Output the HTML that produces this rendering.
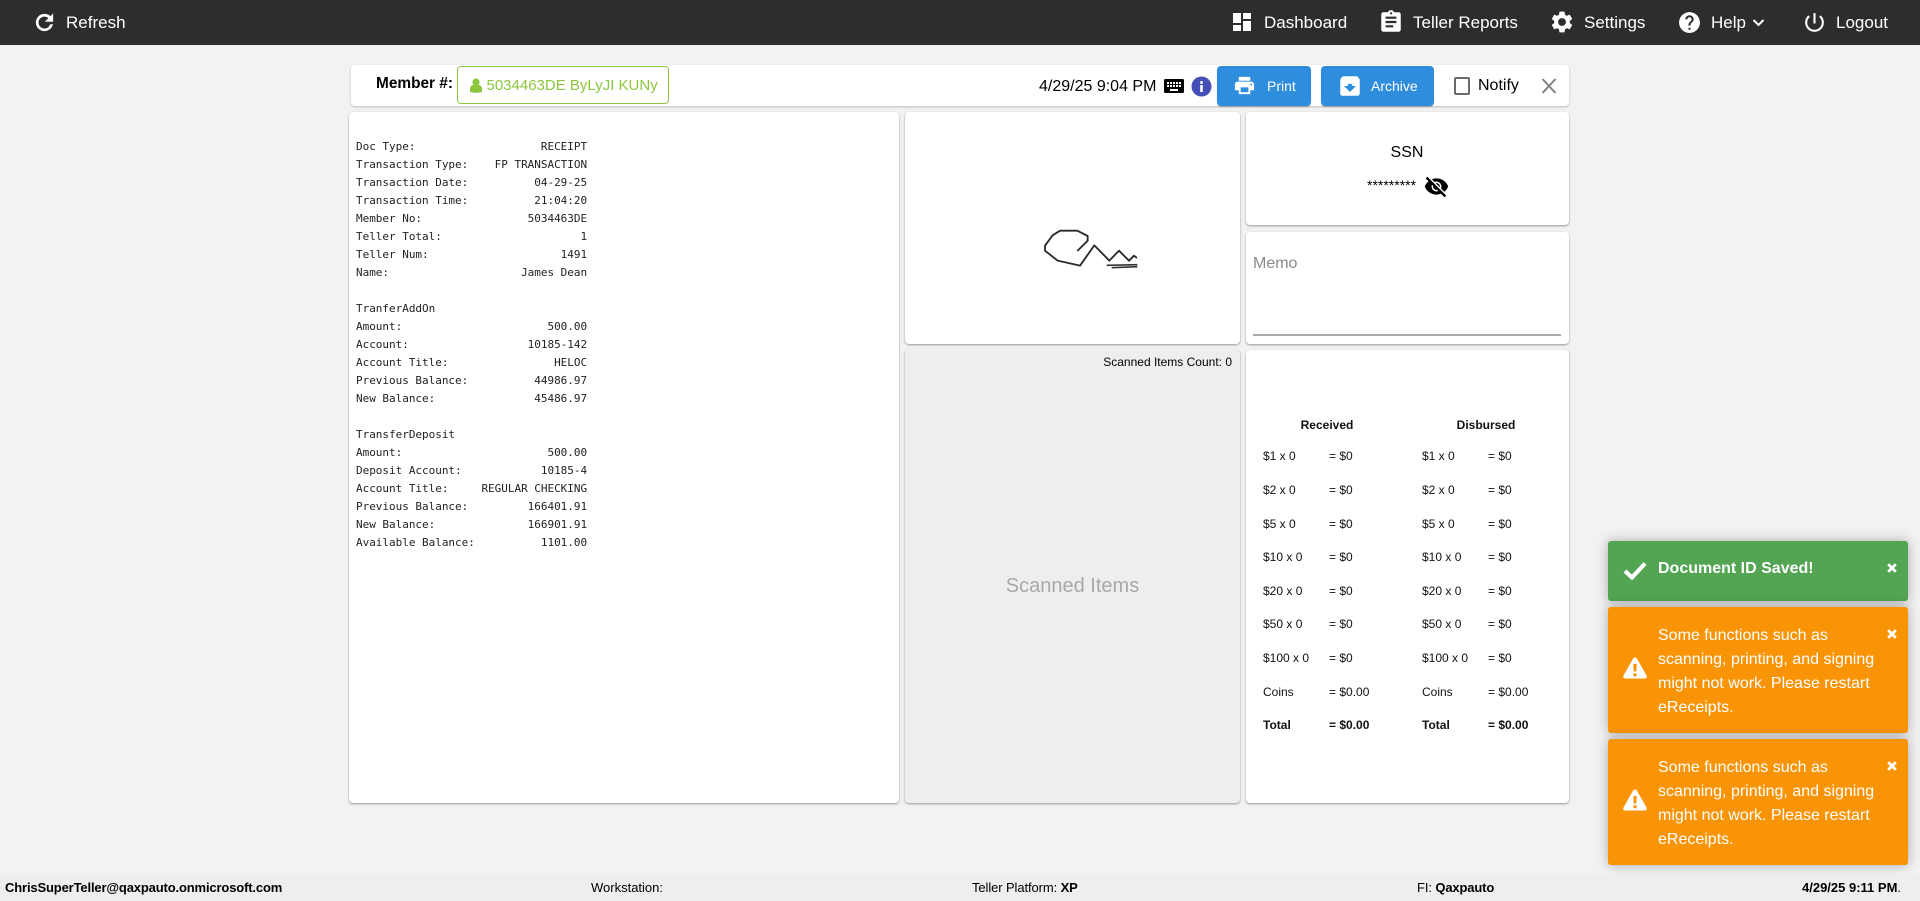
<!DOCTYPE html>
<html lang="en"><head><meta charset="utf-8"><title>Receipt</title>
<style>
html,body{margin:0;padding:0;width:1920px;height:901px;overflow:hidden;background:#f2f2f2;font-family:"Liberation Sans",Arial,sans-serif;color:#000}
.a{position:absolute}
.t{position:absolute;white-space:nowrap}
.card{position:absolute;background:#fff;border-radius:4px;box-shadow:0 1px 2px rgba(0,0,0,.38)}
#hdr{position:absolute;left:0;top:0;width:1920px;height:45px;background:#2d2d2d}
.nav{color:#fff;font-size:17px;line-height:45px;top:0}
svg{position:absolute;display:block}
.w{fill:#fff}
pre{position:absolute;margin:0;left:356px;top:138px;font:11px/18px "DejaVu Sans Mono","Liberation Mono",monospace;color:#222;letter-spacing:-.02px}
.r{font-size:12px;line-height:16px;color:#111}
.toast{position:absolute;left:1608px;width:300px;border-radius:3px;box-shadow:0 0 12px rgba(0,0,0,.3);color:#fff}
.o{background:#fa9407;height:126px}
.msg{position:absolute;left:50px;top:17px;width:235px;font-size:16px;line-height:24px}
.x{position:absolute;left:279px;top:22px}
.btn{position:absolute;top:66px;height:40px;background:#2f8ddd;border-radius:4px;box-shadow:0 1px 1px rgba(0,0,0,.25)}
.ft{font-size:13px;line-height:26px;top:875px}
.ft b,.tight{letter-spacing:-.15px}
</style></head><body>

<div id="hdr"></div>
<svg style="left:32px;top:10px" width="25" height="25" viewBox="0 0 24 24"><path class="w" stroke="#fff" stroke-width=".6" d="M17.65 6.35C16.2 4.9 14.21 4 12 4c-4.42 0-7.99 3.58-7.99 8s3.57 8 7.99 8c3.73 0 6.84-2.55 7.73-6h-2.08c-.82 2.33-3.04 4-5.65 4-3.31 0-6-2.69-6-6s2.69-6 6-6c1.66 0 3.14.69 4.22 1.78L13 11h7V4l-2.35 2.35z"/></svg>
<div class="t nav" style="left:66px">Refresh</div>

<svg style="left:1230px;top:10px" width="24" height="24" viewBox="0 0 24 24"><path class="w" d="M3 13h8V3H3v10zm0 8h8v-6H3v6zm10 0h8V11h-8v10zm0-18v6h8V3h-8z"/></svg>
<div class="t nav" style="left:1264px">Dashboard</div>
<svg style="left:1378px;top:9px" width="26" height="26" viewBox="0 0 24 24"><path class="w" d="M19 3h-4.18C14.4 1.84 13.3 1 12 1c-1.3 0-2.4.84-2.82 2H5c-1.1 0-2 .9-2 2v14c0 1.1.9 2 2 2h14c1.1 0 2-.9 2-2V5c0-1.1-.9-2-2-2zm-7 0c.55 0 1 .45 1 1s-.45 1-1 1-1-.45-1-1 .45-1 1-1zm2 14H7v-2h7v2zm3-4H7v-2h10v2zm0-4H7V7h10v2z"/></svg>
<div class="t nav" style="left:1413px">Teller Reports</div>
<svg style="left:1549px;top:9px" width="26" height="26" viewBox="0 0 24 24"><path class="w" d="M19.14 12.94c.04-.3.06-.61.06-.94 0-.32-.02-.64-.07-.94l2.03-1.58c.18-.14.23-.41.12-.61l-1.92-3.32c-.12-.22-.37-.29-.59-.22l-2.39.96c-.5-.38-1.03-.7-1.62-.94l-.36-2.54c-.04-.24-.24-.41-.48-.41h-3.84c-.24 0-.43.17-.47.41l-.36 2.54c-.59.24-1.13.57-1.62.94l-2.39-.96c-.22-.08-.47 0-.59.22L2.74 8.87c-.12.21-.08.47.12.61l2.03 1.58c-.05.3-.09.63-.09.94s.02.64.07.94l-2.03 1.58c-.18.14-.23.41-.12.61l1.92 3.32c.12.22.37.29.59.22l2.39-.96c.5.38 1.03.7 1.62.94l.36 2.54c.05.24.24.41.48.41h3.84c.24 0 .44-.17.47-.41l.36-2.54c.59-.24 1.13-.56 1.62-.94l2.39.96c.22.08.47 0 .59-.22l1.92-3.32c.12-.22.07-.47-.12-.61l-2.01-1.58zM12 15.6c-1.98 0-3.6-1.62-3.6-3.6s1.62-3.6 3.6-3.6 3.6 1.62 3.6 3.6-1.62 3.6-3.6 3.6z"/></svg>
<div class="t nav" style="left:1584px">Settings</div>
<svg style="left:1677px;top:10px" width="25" height="25" viewBox="0 0 24 24"><path class="w" d="M12 2C6.48 2 2 6.48 2 12s4.48 10 10 10 10-4.48 10-10S17.52 2 12 2zm1 17h-2v-2h2v2zm2.07-7.75l-.9.92C13.45 12.9 13 13.5 13 15h-2v-.5c0-1.1.45-2.1 1.17-2.83l1.24-1.26c.37-.36.59-.86.59-1.41 0-1.1-.9-2-2-2s-2 .9-2 2H8c0-2.21 1.79-4 4-4s4 1.79 4 4c0 .88-.36 1.68-.93 2.25z"/></svg>
<div class="t nav" style="left:1711px">Help</div>
<svg style="left:1752px;top:18px" width="13" height="10" viewBox="0 0 13 10"><path d="M1.5 2l5 5 5-5" fill="none" stroke="#fff" stroke-width="2"/></svg>
<svg style="left:1802px;top:10px" width="25" height="25" viewBox="0 0 24 24"><path class="w" d="M13 3h-2v10h2V3zm4.83 2.17l-1.42 1.42C17.99 7.86 19 9.81 19 12c0 3.87-3.13 7-7 7s-7-3.13-7-7c0-2.19 1.01-4.14 2.58-5.42L6.17 5.17C4.23 6.82 3 9.26 3 12c0 4.97 4.03 9 9 9s9-4.03 9-9c0-2.74-1.23-5.18-3.17-6.83z"/></svg>
<div class="t nav" style="left:1836px">Logout</div>

<!-- top bar -->
<div class="card" style="left:351px;top:65px;width:1218px;height:41px;box-shadow:0 1px 2px rgba(0,0,0,.22)"></div>
<div class="t" style="left:376px;top:73px;font:bold 15.4px/22px 'Liberation Sans',sans-serif">Member #:</div>
<div class="a" style="left:457px;top:66px;width:210px;height:36px;border:1px solid #8dc63f;border-radius:4px"></div>
<svg style="left:470px;top:78px" width="12" height="15" viewBox="0 0 12 15"><circle cx="6" cy="4" r="3.6" fill="#8dc63f"/><path d="M0 14v-3c0-2.5 2-4 3.5-4.2h5C10 7 12 8.500 12 11v3q-6 1.500-12 0z" fill="#8dc63f"/></svg>
<div class="t" style="left:486.500px;top:75px;font-size:15px;line-height:22px;color:#8dc63f">5034463DE ByLyJI KUNy</div>
<div class="t" style="left:1039px;top:76px;font-size:16px;line-height:22px">4/29/25 9:04 PM</div>
<svg style="left:1162px;top:74px" width="24" height="24" viewBox="0 0 24 24"><rect x="2" y="5" width="20" height="14" rx="1.500" fill="#000"/><path fill="#fff" d="M5 8h2v2H5zM8 8h2v2H8zM11 8h2v2h-2zM14 8h2v2h-2zM17 8h2v2h-2zM5 11h2v2H5zM8 11h2v2H8zM11 11h2v2h-2zM14 11h2v2h-2zM17 11h2v2h-2zM8 15h8v2H8z"/></svg>
<svg style="left:1191px;top:76px" width="21" height="21" viewBox="0 0 21 21"><circle cx="10.500" cy="10.500" r="10" fill="#4450b5"/><rect x="9.200" y="9" width="2.600" height="7" fill="#fff"/><rect x="9.200" y="5.200" width="2.600" height="2.600" fill="#fff"/></svg>
<div class="btn" style="left:1217px;width:94px"></div>
<svg style="left:1233px;top:74px" width="23" height="23" viewBox="0 0 24 24"><path class="w" d="M19 8H5c-1.660 0-3 1.340-3 3v6h4v4h12v-4h4v-6c0-1.660-1.340-3-3-3zm-3 11H8v-5h8v5zm3-7c-.55 0-1-.45-1-1s.45-1 1-1 1 .45 1 1-.45 1-1 1zm-1-9H6v4h12V3z"/></svg>
<div class="t" style="left:1267px;top:75px;font-size:14px;line-height:22px;color:#fff">Print</div>
<div class="btn" style="left:1321px;width:113px"></div>
<svg style="left:1337px;top:73px" width="26" height="26" viewBox="0 0 24 24"><path class="w" d="M20.540 5.230l-1.390-1.680C18.880 3.210 18.470 3 18 3H6c-.47 0-.88.21-1.160.55L3.460 5.230C3.170 5.570 3 6.020 3 6.500V19c0 1.100.9 2 2 2h14c1.100 0 2-.9 2-2V6.500c0-.48-.17-.93-.46-1.270zM12 17.500L6.500 12H10v-2h4v2h3.500L12 17.500z"/></svg>
<div class="t" style="left:1371px;top:75px;font-size:14px;line-height:22px;color:#fff">Archive</div>
<div class="a" style="left:1454px;top:77px;width:12px;height:14px;border:2px solid #6b6b6b;border-radius:2px"></div>
<div class="t" style="left:1478px;top:75px;font-size:16px;line-height:22px">Notify</div>
<svg style="left:1541px;top:78px" width="16" height="16" viewBox="0 0 16 16"><path d="M1.500 1l13 14M14.500 1l-13 14" stroke="#808080" stroke-width="2" fill="none"/></svg>

<!-- receipt -->
<div class="card" style="left:349px;top:112px;width:550px;height:691px"></div>
<pre>Doc Type:                   RECEIPT
Transaction Type:    FP TRANSACTION
Transaction Date:          04-29-25
Transaction Time:          21:04:20
Member No:                5034463DE
Teller Total:                     1
Teller Num:                    1491
Name:                    James Dean

TranferAddOn
Amount:                      500.00
Account:                  10185-142
Account Title:                HELOC
Previous Balance:          44986.97
New Balance:               45486.97

TransferDeposit
Amount:                      500.00
Deposit Account:            10185-4
Account Title:     REGULAR CHECKING
Previous Balance:         166401.91
New Balance:              166901.91
Available Balance:          1101.00</pre>

<!-- signature -->
<div class="card" style="left:905px;top:112px;width:335px;height:232px"></div>
<svg style="left:1020px;top:210px" width="150" height="70" viewBox="0 0 450 210"><path d="M172 123L203 92V78L172 62H120L98 76L75 107V122L113 152L180 167L223 106L268 152L297 122L327 152L342 137L351 144" fill="none" stroke="#2a2a2a" stroke-width="5.500" stroke-linejoin="round"/><path d="M260 166L352 164M275 173L352 170" fill="none" stroke="#333" stroke-width="5"/></svg>

<!-- ssn -->
<div class="card" style="left:1246px;top:112px;width:323px;height:113px"></div>
<div class="t" style="left:1246px;top:142px;width:322px;text-align:center;font-size:16px;line-height:22px">SSN</div>
<div class="t" style="left:1367px;top:177px;font-size:14px;line-height:16px">*********</div>
<svg style="left:1424px;top:174px" width="25" height="25" viewBox="0 0 24 24"><path fill="#000" stroke="#000" stroke-width=".5" d="M12 7c2.760 0 5 2.240 5 5 0 .65-.13 1.260-.36 1.830l2.920 2.920c1.510-1.260 2.700-2.890 3.430-4.750-1.730-4.390-6-7.500-11-7.500-1.400 0-2.740.25-3.980.7l2.160 2.160C10.740 7.130 11.350 7 12 7zM2 4.270l2.280 2.280.46.46C3.080 8.300 1.780 10.020 1 12c1.730 4.390 6 7.500 11 7.500 1.550 0 3.030-.3 4.380-.84l.42.42L19.730 22 21 20.730 3.270 3 2 4.270zM7.530 9.800l1.550 1.550c-.05.21-.08.43-.08.65 0 1.660 1.340 3 3 3 .22 0 .44-.03.65-.08l1.550 1.550c-.67.33-1.410.53-2.200.53-2.760 0-5-2.240-5-5 0-.79.2-1.530.53-2.200zm4.310-.78l3.150 3.150.02-.16c0-1.660-1.340-3-3-3l-.17.01z"/></svg>

<!-- memo -->
<div class="card" style="left:1246px;top:232px;width:323px;height:112px"></div>
<div class="t" style="left:1253px;top:253px;font-size:16px;line-height:22px;color:#8c8888">Memo</div>
<div class="a" style="left:1253px;top:334px;width:308px;height:2px;background:#aaa"></div>

<!-- scanned -->
<div class="card" style="left:905px;top:349px;width:335px;height:454px;background:#eee"></div>
<div class="t" style="left:1040px;top:354px;width:192px;text-align:right;font-size:12px;line-height:16px">Scanned Items Count: 0</div>
<div class="t" style="left:905px;top:573px;width:335px;text-align:center;font-size:20px;line-height:26px;color:#a8a8a8">Scanned Items</div>

<!-- totals -->
<div class="card" style="left:1246px;top:350px;width:323px;height:453px"></div>
<div class="t r" style="left:1287px;top:417px;width:80px;text-align:center;font-weight:bold">Received</div>
<div class="t r" style="left:1446px;top:417px;width:80px;text-align:center;font-weight:bold">Disbursed</div>

<div class="t r" style="left:1263px;top:448px">$1 x 0</div><div class="t r" style="left:1329px;top:448px">= $0</div><div class="t r" style="left:1422px;top:448px">$1 x 0</div><div class="t r" style="left:1488px;top:448px">= $0</div>
<div class="t r" style="left:1263px;top:482px">$2 x 0</div><div class="t r" style="left:1329px;top:482px">= $0</div><div class="t r" style="left:1422px;top:482px">$2 x 0</div><div class="t r" style="left:1488px;top:482px">= $0</div>
<div class="t r" style="left:1263px;top:516px">$5 x 0</div><div class="t r" style="left:1329px;top:516px">= $0</div><div class="t r" style="left:1422px;top:516px">$5 x 0</div><div class="t r" style="left:1488px;top:516px">= $0</div>
<div class="t r" style="left:1263px;top:549px">$10 x 0</div><div class="t r" style="left:1329px;top:549px">= $0</div><div class="t r" style="left:1422px;top:549px">$10 x 0</div><div class="t r" style="left:1488px;top:549px">= $0</div>
<div class="t r" style="left:1263px;top:583px">$20 x 0</div><div class="t r" style="left:1329px;top:583px">= $0</div><div class="t r" style="left:1422px;top:583px">$20 x 0</div><div class="t r" style="left:1488px;top:583px">= $0</div>
<div class="t r" style="left:1263px;top:616px">$50 x 0</div><div class="t r" style="left:1329px;top:616px">= $0</div><div class="t r" style="left:1422px;top:616px">$50 x 0</div><div class="t r" style="left:1488px;top:616px">= $0</div>
<div class="t r" style="left:1263px;top:650px">$100 x 0</div><div class="t r" style="left:1329px;top:650px">= $0</div><div class="t r" style="left:1422px;top:650px">$100 x 0</div><div class="t r" style="left:1488px;top:650px">= $0</div>
<div class="t r" style="left:1263px;top:684px">Coins</div><div class="t r" style="left:1329px;top:684px">= $0.00</div><div class="t r" style="left:1422px;top:684px">Coins</div><div class="t r" style="left:1488px;top:684px">= $0.00</div>
<div class="t r" style="left:1263px;top:717px;font-weight:bold">Total</div><div class="t r" style="left:1329px;top:717px;font-weight:bold">= $0.00</div><div class="t r" style="left:1422px;top:717px;font-weight:bold">Total</div><div class="t r" style="left:1488px;top:717px;font-weight:bold">= $0.00</div>

<!-- toasts -->
<div class="toast" style="top:541px;height:60px;background:#53a453">
  <svg style="left:15px;top:20px" width="24" height="19" viewBox="0 0 24 19"><path d="M2 10l7 6.500L22 2.500" fill="none" stroke="#fff" stroke-width="4.200"/></svg>
  <div class="t" style="left:50px;top:16px;font:bold 16px/24px 'Liberation Sans',sans-serif">Document ID Saved!</div>
  <svg class="x" width="10" height="10" viewBox="0 0 10 10"><path d="M1.200 1.200l7.600 7.600M8.800 1.200l-7.600 7.600" stroke="#fff" stroke-width="2.800"/></svg>
</div>
<div class="toast o" style="top:607px">
  <svg style="left:15px;top:50px" width="24" height="22" viewBox="0 0 24 22"><path fill="#fff" fill-rule="evenodd" d="M12 0.500c.9 0 1.500.4 2 1.200l9.500 16.800c.8 1.500-.1 3-1.800 3H2.300c-1.700 0-2.600-1.500-1.800-3L10 1.700c.5-.8 1.100-1.200 2-1.200zM10.300 7l.4 7.500h2.600l.4-7.500zM10.400 16.200v3h3.200v-3z"/></svg>
  <div class="msg">Some functions such as<br>scanning, printing, and signing<br>might not work. Please restart<br>eReceipts.</div>
  <svg class="x" width="10" height="10" viewBox="0 0 10 10"><path d="M1.200 1.200l7.600 7.600M8.800 1.200l-7.600 7.600" stroke="#fff" stroke-width="2.800"/></svg>
</div>
<div class="toast o" style="top:739px">
  <svg style="left:15px;top:50px" width="24" height="22" viewBox="0 0 24 22"><path fill="#fff" fill-rule="evenodd" d="M12 0.500c.9 0 1.500.4 2 1.200l9.500 16.800c.8 1.500-.1 3-1.800 3H2.300c-1.700 0-2.600-1.500-1.800-3L10 1.700c.5-.8 1.100-1.200 2-1.200zM10.300 7l.4 7.500h2.600l.4-7.500zM10.400 16.200v3h3.200v-3z"/></svg>
  <div class="msg">Some functions such as<br>scanning, printing, and signing<br>might not work. Please restart<br>eReceipts.</div>
  <svg class="x" width="10" height="10" viewBox="0 0 10 10"><path d="M1.200 1.200l7.600 7.600M8.800 1.200l-7.600 7.600" stroke="#fff" stroke-width="2.800"/></svg>
</div>

<!-- footer -->
<div class="a" style="left:0;top:875px;width:1920px;height:26px;background:#eceef0"></div>
<div class="t ft tight" style="left:5px;font-weight:bold">ChrisSuperTeller@qaxpauto.onmicrosoft.com</div>
<div class="t ft" style="left:591px">Workstation:</div>
<div class="t ft" style="left:972px;letter-spacing:-.1px">Teller Platform: <b>XP</b></div>
<div class="t ft" style="left:1417px;letter-spacing:-.1px">FI: <b>Qaxpauto</b></div>
<div class="t ft" style="left:1802px;font-weight:bold">4/29/25 9:11 PM<span style="font-weight:normal">.</span></div>

</body></html>
